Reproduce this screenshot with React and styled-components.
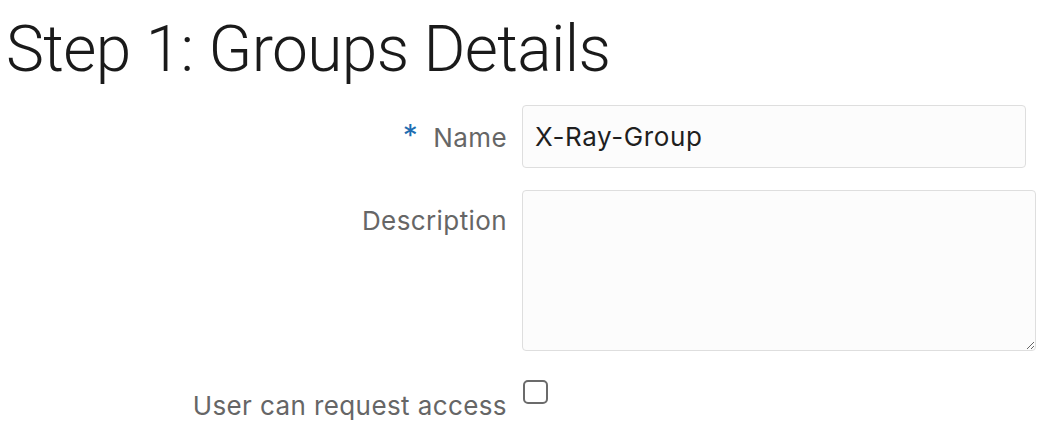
import styled, { createGlobalStyle } from "styled-components";

const GlobalStyle = createGlobalStyle`
	body {
		margin: 0;
		background: #ffffff;
		font-family: "Inter", "Liberation Sans", sans-serif;
	}
`;

const Page = styled.div`
	padding: 0 0 0 6px;
`;

const Title = styled.h1`
	margin: 0;
	padding-top: 11px;
	font-family: "Roboto", "Liberation Sans", sans-serif;
	font-weight: 300;
	font-size: 64px;
	line-height: 78px;
	color: #1a1a1a;
	letter-spacing: -0.6px;
`;

const Form = styled.div`
	display: grid;
	grid-template-columns: 501px 1fr;
	column-gap: 15px;
	row-gap: 22px;
	padding-top: 16px;
	padding-right: 14px;
`;

const Label = styled.label`
	display: flex;
	justify-content: flex-end;
	align-items: flex-start;
	font-size: 26px;
	line-height: 30px;
	letter-spacing: 0.4px;
	color: #666666;
	padding-top: ${(p) => p.$top || 0}px;
`;

const Required = styled.span`
	color: #1f6db1;
	font-size: 30px;
	line-height: 20px;
	margin-right: 15px;
	margin-top: 2px;
`;

const Field = styled.div`
	display: flex;
	padding-right: ${(p) => p.$inset || 0}px;
`;

const TextInput = styled.input`
	width: 100%;
	height: 63px;
	box-sizing: border-box;
	border: 1px solid #dedede;
	border-radius: 4px;
	background: #fcfcfc;
	padding: 0 12px;
	font-family: "Inter", "Liberation Sans", sans-serif;
	font-size: 26px;
	letter-spacing: 0.6px;
	color: #1f1f1f;
	outline: none;
`;

const TextArea = styled.textarea`
	width: 100%;
	height: 161px;
	box-sizing: border-box;
	border: 1px solid #dedede;
	border-radius: 4px;
	background: #fcfcfc;
	padding: 10px 12px;
	font-family: "Inter", "Liberation Sans", sans-serif;
	font-size: 26px;
	outline: none;
	resize: both;
`;

const CheckBox = styled.span`
	display: block;
	width: 25px;
	height: 24px;
	box-sizing: border-box;
	border: 2px solid #6b6b6b;
	border-radius: 5px;
	margin: 7px 0 0 1px;
`;

export default function App() {
	return (
		<Page>
			<GlobalStyle />
			<Title>Step 1: Groups Details</Title>
			<Form>
				<Label $top={18}>
					<Required>*</Required>
					Name
				</Label>
				<Field $inset={10}>
					<TextInput defaultValue="X-Ray-Group" />
				</Field>
				<Label $top={16}>Description</Label>
				<Field>
					<TextArea />
				</Field>
				<Label $top={18}>User can request access</Label>
				<Field>
					<CheckBox />
				</Field>
			</Form>
		</Page>
	);
}
